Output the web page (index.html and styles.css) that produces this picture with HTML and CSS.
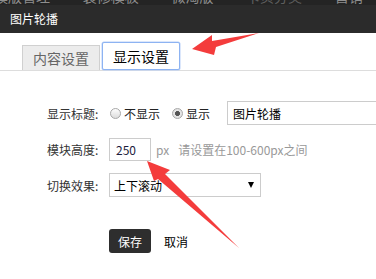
FILE: index.html
```html
<!DOCTYPE html>
<html lang="zh-CN">
<head>
    <meta charset="UTF-8">
    <meta name="viewport" content="width=device-width, initial-scale=1.0">
    <title>图片轮播</title>
    <link rel="stylesheet" href="styles.css">
</head>
<body>
    <div class="nav">
        <span class="nav-item" style="margin-left: -6px">模版管理</span>
        <span class="nav-item">装修模板</span>
        <span class="nav-item">微淘版</span>
        <span class="nav-item dim">卡页分类</span>
        <span class="nav-item">营销</span>
    </div>
    <div class="header">图片轮播</div>

    <div class="tabs">
        <div class="tab">内容设置</div>
        <div class="tab active">显示设置</div>
    </div>

    <div class="form">
        <div class="row">
            <label class="label">显示标题:</label>
            <label class="radio"><input type="radio" name="title"> 不显示</label>
            <label class="radio"><input type="radio" name="title" checked> 显示</label>
            <input class="text-input" type="text" value="图片轮播">
        </div>
        <div class="row">
            <label class="label">模块高度:</label>
            <input class="num-input" type="text" value="250">
            <span class="unit">px</span>
            <span class="hint">请设置在100-600px之间</span>
        </div>
        <div class="row">
            <label class="label">切换效果:</label>
            <div class="select">
                <span>上下滚动</span>
                <span class="caret"></span>
            </div>
        </div>
        <div class="actions">
            <button class="btn-save">保存</button>
            <button class="btn-cancel">取消</button>
        </div>
    </div>

    <!-- annotation arrows drawn over the screenshot -->
    <svg class="arrows" width="376" height="279" viewBox="0 0 376 279">
        <polygon points="192,49 212,35 212,41 259,33 216,47 214,55" />
        <polygon points="147,161 170,170 165,174 239,248 158,179 154,181" />
    </svg>
</body>
</html>
```

FILE: styles.css
```css
body {
    margin: 0;
    width: 376px;
    height: 279px;
    overflow: hidden;
    position: relative;
    font-family: "Noto Sans CJK SC", "Noto Sans", sans-serif;
    font-size: 12px;
    color: #333;
    background: #fff;
}
.nav {
    height: 5px;
    overflow: hidden;
    background: #242424;
    white-space: nowrap;
}
.nav-item {
    display: inline-block;
    font-size: 14px;
    line-height: 14px;
    margin-top: -11px;
    margin-right: 30px;
    color: #8e8e8e;
    vertical-align: top;
}
.nav-item.dim {
    color: #5e5e5e;
}
.header {
    height: 28px;
    line-height: 28px;
    padding-left: 10px;
    background: #2b2b2b;
    color: #fff;
}
.tabs {
    display: flex;
    align-items: flex-end;
    gap: 2px;
    padding: 9px 0 0 22px;
    border-bottom: 1px solid #ddd;
}
.tab {
    width: 76px;
    height: 24px;
    line-height: 24px;
    text-align: center;
    font-size: 14px;
    color: #666;
    background: #ececec;
    border: 1px solid #d0d0d0;
    border-bottom: none;
}
.tab.active {
    height: 26px;
    line-height: 26px;
    color: #000;
    background: #fff;
    border: 1px solid #8db3f2;
    border-radius: 2px;
    box-shadow: 0 0 0 0.5px #b9d0f7;
}
.form {
    padding: 30px 0 0 47px;
}
.row {
    display: flex;
    align-items: center;
    height: 24px;
    margin-bottom: 12px;
    white-space: nowrap;
}
.row > * {
    flex-shrink: 0;
}
.label {
    width: 62px;
    color: #333;
}
.radio {
    display: flex;
    align-items: center;
    gap: 3px;
    margin-right: 11px;
    color: #222;
}
.radio input {
    appearance: none;
    margin: 0 0 0 1px;
    width: 11px;
    height: 11px;
    border-radius: 50%;
    border: 1px solid #a8a8a8;
    background: linear-gradient(#fdfdfd, #dcdcdc);
}
.radio input:checked {
    background: radial-gradient(circle, #555 0, #555 2.2px, #e6e6e6 2.8px, #dcdcdc 100%);
}
.radio + .radio {
    margin-right: 17px;
}
.text-input {
    box-sizing: border-box;
    width: 152px;
    height: 24px;
    padding: 0 5px;
    border: 1px solid #ccc;
    border-right: none;
    font: inherit;
    color: #000;
    outline: none;
}
.num-input {
    box-sizing: border-box;
    width: 42px;
    height: 23px;
    padding: 0 6px;
    border: 1px solid #ccc;
    font: inherit;
    color: #1c1c3c;
    outline: none;
}
.unit {
    margin-left: 5px;
    color: #999;
}
.hint {
    margin-left: 9px;
    color: #999;
}
.select {
    box-sizing: border-box;
    width: 152px;
    height: 24px;
    padding: 0 6px 0 4px;
    display: flex;
    align-items: center;
    justify-content: space-between;
    border: 1px solid #ccc;
    color: #000;
}
.caret {
    width: 0;
    height: 0;
    border-left: 3px solid transparent;
    border-right: 3px solid transparent;
    border-top: 6px solid #000;
}
.actions {
    display: flex;
    align-items: center;
    gap: 13px;
    padding: 20px 0 0 62px;
}
.btn-save {
    width: 42px;
    height: 24px;
    padding: 0;
    border: none;
    border-radius: 3px;
    background: #2e2e2e;
    color: #fff;
    font: inherit;
}
.btn-cancel {
    padding: 0;
    border: none;
    background: none;
    color: #000;
    font: inherit;
}
.arrows {
    position: absolute;
    top: 0;
    left: 0;
    pointer-events: none;
}
.arrows polygon {
    fill: #f43c3c;
}
```
